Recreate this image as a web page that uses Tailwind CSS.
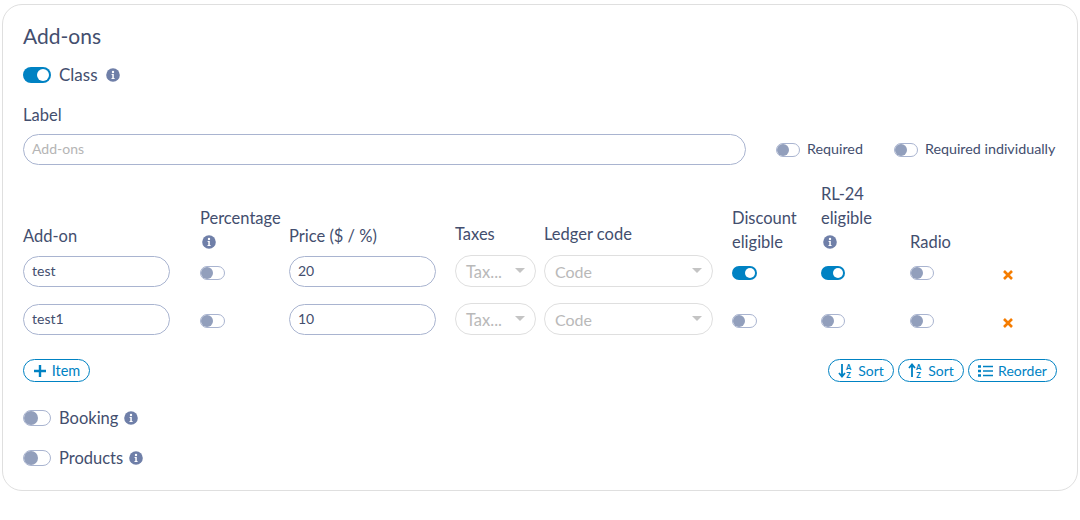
<!DOCTYPE html>
<html lang="en">
<head>
<meta charset="UTF-8">
<title>Add-ons</title>
<script src="https://cdn.jsdelivr.net/npm/@tailwindcss/browser@4"></script>
</head>
<body class="bg-white font-['Lato',sans-serif] text-[#434e6e] overflow-hidden">
<div class="h-[520px] pt-1 pl-0.5 pr-0.5">
  <section class="w-[1076px] h-[487px] border border-[#dfdfdf] rounded-[20px] pt-[19px] px-5">
    <h2 class="text-[21px] leading-6 h-6">Add-ons</h2>

    <!-- class toggle -->
    <div class="flex items-center h-4 mt-[19px]">
      <span class="w-7 h-4 rounded-full bg-[#0082c3] flex items-center justify-end pr-[2px]"><span class="w-3 h-3 rounded-full bg-white"></span></span>
      <span class="ml-2 text-[17px]">Class</span>
      <svg class="ml-2 w-[14px] h-[14px]" viewBox="0 0 14 14"><circle cx="7" cy="7" r="6.8" fill="#6f7fa8"/><circle cx="7" cy="4" r="1.2" fill="#fff"/><path d="M5.6 6h2.2v3.9h.8v1H5.5v-1h.8V7h-.7z" fill="#fff"/></svg>
    </div>

    <div class="text-[16.5px] leading-6 mt-5">Label</div>
    <div class="flex items-center mt-[7px]">
      <div class="w-[723px] h-[31px] border border-[#a9b4d0] rounded-full px-2 text-[14px] leading-[27px] text-[#b5b5b5]">Add-ons</div>
      <span class="ml-[30px] w-6 h-[14px] rounded-full border border-[#a9b4d0] flex items-center"><span class="w-3 h-3 rounded-full bg-[#929fbc]"></span></span>
      <span class="ml-[7px] mb-[2px] text-[14.3px]">Required</span>
      <span class="ml-[31px] w-6 h-[14px] rounded-full border border-[#a9b4d0] flex items-center"><span class="w-3 h-3 rounded-full bg-[#929fbc]"></span></span>
      <span class="ml-[7px] mb-[2px] text-[14.3px]">Required individually</span>
    </div>

    <!-- table head -->
    <div class="grid grid-cols-[177px_89px_166px_89px_188px_89px_89px_92px_1fr] items-end text-[16.5px] leading-6 mt-[17px] h-[72px]">
      <div class="pb-[6px]">Add-on</div>
      <div><div>Percentage</div><div class="h-6 flex items-center pl-[2px]"><svg class="w-[14px] h-[14px]" viewBox="0 0 14 14"><circle cx="7" cy="7" r="6.8" fill="#6f7fa8"/><circle cx="7" cy="4" r="1.2" fill="#fff"/><path d="M5.6 6h2.2v3.9h.8v1H5.5v-1h.8V7h-.7z" fill="#fff"/></svg></div></div>
      <div class="pb-[6px]">Price ($ / %)</div>
      <div class="pb-2">Taxes</div>
      <div class="pb-2">Ledger code</div>
      <div>Discount<br>eligible</div>
      <div><div>RL-24</div><div>eligible</div><div class="h-6 flex items-center pl-[2px]"><svg class="w-[14px] h-[14px]" viewBox="0 0 14 14"><circle cx="7" cy="7" r="6.8" fill="#6f7fa8"/><circle cx="7" cy="4" r="1.2" fill="#fff"/><path d="M5.6 6h2.2v3.9h.8v1H5.5v-1h.8V7h-.7z" fill="#fff"/></svg></div></div>
      <div>Radio</div>
      <div></div>
    </div>

    <!-- rows -->
    <div class="grid grid-cols-[177px_89px_166px_89px_188px_89px_89px_92px_1fr] items-center h-[32px] mt-[1px]">
      <div class="w-[147px] h-[31px] border border-[#a9b4d0] rounded-full px-2 text-[14px] leading-[28px]">test</div>
      <div class="pt-1"><span class="w-[25px] h-[14px] rounded-full border border-[#a9b4d0] flex items-center"><span class="w-3 h-3 rounded-full bg-[#929fbc]"></span></span></div>
      <div class="w-[147px] h-[31px] border border-[#a9b4d0] rounded-full px-2 text-[14px] leading-[28px]">20</div>
      <div class="w-[81px] h-[32px] border border-[#dfdfdf] rounded-full px-[10px] flex items-center justify-between text-[16.5px] text-[#b9b9b9]"><span class="mt-[3px]">Tax...</span><span class="w-0 h-0 mb-[2px] border-x-[5px] border-x-transparent border-t-[5px] border-t-[#c4c4c4]"></span></div>
      <div class="w-[169px] h-[32px] border border-[#dfdfdf] rounded-full px-[10px] flex items-center justify-between text-[16px] text-[#b9b9b9]"><span class="mt-[1px]">Code</span><span class="w-0 h-0 mb-[2px] border-x-[5px] border-x-transparent border-t-[5px] border-t-[#c4c4c4]"></span></div>
      <div class="pt-1"><span class="w-[25px] h-[14px] rounded-full bg-[#0082c3] flex items-center justify-end pr-[2px]"><span class="w-[10px] h-[10px] rounded-full bg-white"></span></span></div>
      <div class="pt-1"><span class="w-6 h-[14px] rounded-full bg-[#0082c3] flex items-center justify-end pr-[2px]"><span class="w-[10px] h-[10px] rounded-full bg-white"></span></span></div>
      <div class="pt-1"><span class="w-6 h-[14px] rounded-full border border-[#a9b4d0] flex items-center"><span class="w-3 h-3 rounded-full bg-[#929fbc]"></span></span></div>
      <div><svg class="w-3 h-3 mt-[7px]" viewBox="0 0 12 12"><path d="M2 2l8 8M10 2l-8 8" stroke="#f57c00" stroke-width="2.6"/></svg></div>
    </div>
    <div class="grid grid-cols-[177px_89px_166px_89px_188px_89px_89px_92px_1fr] items-center h-[32px] mt-4">
      <div class="w-[147px] h-[31px] border border-[#a9b4d0] rounded-full px-2 text-[14px] leading-[28px]">test1</div>
      <div class="pt-1"><span class="w-[25px] h-[14px] rounded-full border border-[#a9b4d0] flex items-center"><span class="w-3 h-3 rounded-full bg-[#929fbc]"></span></span></div>
      <div class="w-[147px] h-[31px] border border-[#a9b4d0] rounded-full px-2 text-[14px] leading-[28px]">10</div>
      <div class="w-[81px] h-[32px] border border-[#dfdfdf] rounded-full px-[10px] flex items-center justify-between text-[16.5px] text-[#b9b9b9]"><span class="mt-[3px]">Tax...</span><span class="w-0 h-0 mb-[2px] border-x-[5px] border-x-transparent border-t-[5px] border-t-[#c4c4c4]"></span></div>
      <div class="w-[169px] h-[32px] border border-[#dfdfdf] rounded-full px-[10px] flex items-center justify-between text-[16px] text-[#b9b9b9]"><span class="mt-[1px]">Code</span><span class="w-0 h-0 mb-[2px] border-x-[5px] border-x-transparent border-t-[5px] border-t-[#c4c4c4]"></span></div>
      <div class="pt-1"><span class="w-[25px] h-[14px] rounded-full border border-[#a9b4d0] flex items-center"><span class="w-3 h-3 rounded-full bg-[#929fbc]"></span></span></div>
      <div class="pt-1"><span class="w-6 h-[14px] rounded-full border border-[#a9b4d0] flex items-center"><span class="w-3 h-3 rounded-full bg-[#929fbc]"></span></span></div>
      <div class="pt-1"><span class="w-6 h-[14px] rounded-full border border-[#a9b4d0] flex items-center"><span class="w-3 h-3 rounded-full bg-[#929fbc]"></span></span></div>
      <div><svg class="w-3 h-3 mt-[7px]" viewBox="0 0 12 12"><path d="M2 2l8 8M10 2l-8 8" stroke="#f57c00" stroke-width="2.6"/></svg></div>
    </div>

    <!-- buttons -->
    <div class="flex items-center justify-between mt-6 text-[14px] text-[#0082c3]">
      <span class="h-[23px] w-[67px] border border-[#0082c3] rounded-full flex items-center justify-center gap-[6px] pl-[1px] text-[14.5px]">
        <svg class="w-3 h-3" viewBox="0 0 12 12"><path d="M6 0v12M0 6h12" stroke="#0082c3" stroke-width="2.4"/></svg>Item</span>
      <div class="flex gap-[4px]">
        <span class="h-[23px] w-[66px] border border-[#0082c3] rounded-full flex items-center justify-center gap-[5px]">
          <svg class="w-[15px] h-[15px]" viewBox="0 0 15 15"><path d="M4 1v12M1 10l3 3.5 3-3.5" stroke="#0082c3" stroke-width="1.8" fill="none"/><text x="8" y="6.5" font-size="7.5" font-weight="900" font-family="Lato" fill="#0082c3">A</text><text x="8.2" y="14.5" font-size="7.5" font-weight="900" font-family="Lato" fill="#0082c3">Z</text></svg>Sort</span>
        <span class="h-[23px] w-[66px] border border-[#0082c3] rounded-full flex items-center justify-center gap-[5px]">
          <svg class="w-[15px] h-[15px]" viewBox="0 0 15 15"><path d="M4 14V2M1 5l3-3.5 3 3.5" stroke="#0082c3" stroke-width="1.8" fill="none"/><text x="8" y="6.5" font-size="7.5" font-weight="900" font-family="Lato" fill="#0082c3">A</text><text x="8.2" y="14.5" font-size="7.5" font-weight="900" font-family="Lato" fill="#0082c3">Z</text></svg>Sort</span>
        <span class="h-[23px] w-[89px] border border-[#0082c3] rounded-full flex items-center justify-center gap-[5px]">
          <svg class="w-[15px] h-[14px]" viewBox="0 0 15 14"><path d="M0 2.5h3M0 7h3M0 11.5h3" stroke="#0082c3" stroke-width="2.4" fill="none"/><path d="M5 2.5h10M5 7h10M5 11.5h10" stroke="#0082c3" stroke-width="1.6" fill="none"/></svg>Reorder</span>
      </div>
    </div>

    <div class="flex items-center h-4 mt-7">
      <span class="w-7 h-4 rounded-full border border-[#a9b4d0] flex items-center"><span class="w-[14px] h-[14px] rounded-full bg-[#929fbc]"></span></span>
      <span class="ml-2 text-[16.5px]">Booking</span>
      <svg class="ml-[6px] w-[14px] h-[14px]" viewBox="0 0 14 14"><circle cx="7" cy="7" r="6.8" fill="#6f7fa8"/><circle cx="7" cy="4" r="1.2" fill="#fff"/><path d="M5.6 6h2.2v3.9h.8v1H5.5v-1h.8V7h-.7z" fill="#fff"/></svg>
    </div>
    <div class="flex items-center h-4 mt-6">
      <span class="w-7 h-4 rounded-full border border-[#a9b4d0] flex items-center"><span class="w-[14px] h-[14px] rounded-full bg-[#929fbc]"></span></span>
      <span class="ml-2 text-[16.5px]">Products</span>
      <svg class="ml-[6px] w-[14px] h-[14px]" viewBox="0 0 14 14"><circle cx="7" cy="7" r="6.8" fill="#6f7fa8"/><circle cx="7" cy="4" r="1.2" fill="#fff"/><path d="M5.6 6h2.2v3.9h.8v1H5.5v-1h.8V7h-.7z" fill="#fff"/></svg>
    </div>
  </section>
</div>
</body>
</html>
